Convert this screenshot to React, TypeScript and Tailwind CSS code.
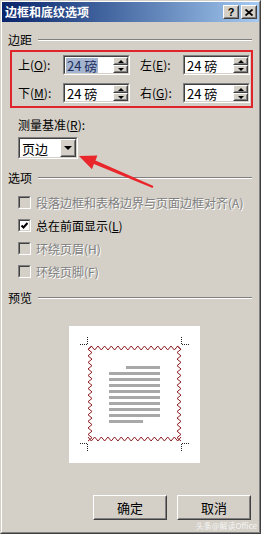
import React from 'react'

const font = "font-['Noto_Sans_CJK_SC','Noto_Sans',sans-serif]"

const Raised = ({ className = '', children }: { className?: string, children?: React.ReactNode }) => (
  <div className={`border border-t-white border-l-white border-r-[#404040] border-b-[#404040] bg-[#d4d0c8] ${className}`}>
    <div className="w-full h-full border border-t-[#d4d0c8] border-l-[#d4d0c8] border-r-[#808080] border-b-[#808080] flex items-center justify-center">
      {children}
    </div>
  </div>
)

const Sunken = ({ className = '', inner = 'bg-white', children }: { className?: string, inner?: string, children?: React.ReactNode }) => (
  <div className={`border border-t-[#808080] border-l-[#808080] border-r-white border-b-white ${className}`}>
    <div className={`w-full h-full border border-t-[#404040] border-l-[#404040] border-r-[#d4d0c8] border-b-[#d4d0c8] flex ${inner}`}>
      {children}
    </div>
  </div>
)

const Section = ({ title }: { title: string }) => (
  <div className="ml-[6px] w-[244px] h-[14px] flex items-center gap-[6px]">
    <span className="text-[12px] leading-[14px] text-black">{title}</span>
    <div className="flex-1 border-t border-t-[#808080] border-b border-b-white" />
  </div>
)

const Spin = ({ selected }: { selected?: boolean }) => (
  <Sunken className="w-[67px] h-[20px]">
    <div className="flex-1 flex items-center pl-px">
      <span className={`text-[13px] leading-[15px] px-px ${selected ? 'bg-[#a5b5d0] text-[#1c2d5c]' : 'text-black'}`}>24 磅</span>
    </div>
    <div className="w-[15px] flex flex-col">
      <Raised className="h-[8px] w-full">
        <div className="w-0 h-0 border-x-[3px] border-x-transparent border-b-[3px] border-b-black" />
      </Raised>
      <Raised className="h-[8px] w-full">
        <div className="w-0 h-0 border-x-[3px] border-x-transparent border-t-[3px] border-t-black" />
      </Raised>
    </div>
  </Sunken>
)

const Label = ({ ch, k, w }: { ch: string, k: string, w: string }) => (
  <span className={`text-[12px] leading-[14px] text-black ${w}`}>{ch}(<u>{k}</u>):</span>
)

const Check = ({ text, k, checked, disabled }: { text: string, k: string, checked?: boolean, disabled?: boolean }) => (
  <div className="ml-[16px] h-[23px] flex items-center gap-[5px]">
    <Sunken className="w-[13px] h-[13px]" inner={disabled ? 'bg-[#d4d0c8]' : 'bg-white'}>
      {checked && (
        <svg width="9" height="9" viewBox="0 0 9 9">
          <path d="M1.5 4.5 L3.5 6.5 L7.5 2" stroke="black" strokeWidth="2" fill="none" />
        </svg>
      )}
    </Sunken>
    <span className={`text-[12px] leading-[14px] ${disabled ? 'text-[#808080] [text-shadow:1px_1px_0_#fff]' : 'text-black'}`}>
      {text}({checked ? <u>{k}</u> : k})
    </span>
  </div>
)

const zig = (x1: number, y1: number, x2: number, y2: number, amp: number) => {
  const pts: string[] = []
  const horiz = y1 === y2
  const len = horiz ? x2 - x1 : y2 - y1
  const n = Math.round(len / 3.3)
  for (let i = 0; i <= n; i++) {
    const t = (len * i) / n
    const off = i % 2 === 0 ? 0 : amp
    pts.push(horiz ? `${x1 + t},${y1 + off}` : `${x1 + off},${y1 + t}`)
  }
  return pts.join(' ')
}

const Preview = () => (
  <div className="ml-[67px] w-[131px] h-[137px] bg-white">
    <svg width="131" height="137" viewBox="0 0 131 137">
      <g stroke="#222" strokeWidth="1" strokeDasharray="1 1" fill="none">
        <path d="M11 18.5 H18.5 V11" />
        <path d="M120 18.5 H112.5 V11" />
        <path d="M11 117.5 H18.5 V125" />
        <path d="M120 117.5 H112.5 V125" />
      </g>
      <g stroke="#8e1c22" strokeWidth="1" fill="none">
        <polyline points={zig(19, 24, 112, 24, -4)} />
        <polyline points={zig(19, 111, 112, 111, 4)} />
        <polyline points={zig(23, 20, 23, 115, -4)} />
        <polyline points={zig(108, 20, 108, 115, 4)} />
      </g>
      <g fill="#a8a8a8">
        <rect x="57" y="40" width="34" height="3" />
        {[1, 2, 3, 4, 5, 6, 7, 8].map(i => (
          <rect key={i} x="40" y={40 + i * 6} width="51" height="3" />
        ))}
        <rect x="40" y="94" width="34" height="3" />
      </g>
    </svg>
  </div>
)

export default function App() {
  return (
    <div className={`relative w-[261px] h-[534px] overflow-hidden bg-[#d4d0c8] border border-t-[#d4d0c8] border-l-[#d4d0c8] border-r-[#404040] border-b-[#404040] ${font}`}>
      <div className="h-full border border-t-white border-l-white border-r-[#808080] border-b-[#808080] flex flex-col">
        <div className="h-[20px] bg-gradient-to-r from-[#0a246a] to-[#a6caf0] flex items-center pl-[3px] pr-[2px]">
          <span className="text-white font-bold text-[12px] leading-[14px] flex-1">边框和底纹选项</span>
          <Raised className="w-[16px] h-[14px]">
            <span className="text-[11px] leading-none font-bold text-black font-['Liberation_Sans',sans-serif]">?</span>
          </Raised>
          <Raised className="w-[16px] h-[14px] ml-[2px]">
            <svg width="8" height="7" viewBox="0 0 8 7">
              <path d="M0.5 0.5 L7.5 6.5 M7.5 0.5 L0.5 6.5" stroke="black" strokeWidth="1.8" />
            </svg>
          </Raised>
        </div>

        <div className="mt-[11px]"><Section title="边距" /></div>

        <div className="ml-[8px] mt-[3px] w-[243px] h-[58px] border-2 border-[#e0242c] pt-[3px] pl-[6px] flex flex-col gap-[8px]">
          <div className="flex items-center">
            <Label ch="上" k="O" w="w-[45px]" />
            <Spin selected />
            <span className="ml-[10px]" />
            <Label ch="左" k="E" w="w-[43px]" />
            <Spin />
          </div>
          <div className="flex items-center">
            <Label ch="下" k="M" w="w-[45px]" />
            <Spin />
            <span className="ml-[10px]" />
            <Label ch="右" k="G" w="w-[43px]" />
            <Spin />
          </div>
        </div>

        <div className="ml-[16px] mt-[10px] text-[12px] leading-[14px] text-black">测量基准(<u>R</u>):</div>
        <Sunken className="ml-[16px] mt-[5px] w-[60px] h-[22px]">
          <div className="flex-1 flex items-center pl-[2px] text-[13px] leading-[15px] text-black">页边</div>
          <Raised className="w-[16px] h-full">
            <div className="w-0 h-0 border-x-[4px] border-x-transparent border-t-[4px] border-t-black" />
          </Raised>
        </Sunken>

        <div className="mt-[12px]"><Section title="选项" /></div>
        <div className="mt-[6px]">
          <Check text="段落边框和表格边界与页面边框对齐" k="A" disabled />
          <Check text="总在前面显示" k="L" checked />
          <Check text="环绕页眉" k="H" disabled />
          <Check text="环绕页脚" k="F" disabled />
        </div>

        <div className="mt-[8px]"><Section title="预览" /></div>
        <div className="mt-[21px]"><Preview /></div>

        <div className="ml-[91px] mt-[32px] flex gap-[10px]">
          <Raised className="w-[74px] h-[25px]">
            <span className="text-[13px] leading-[15px] text-black">确定</span>
          </Raised>
          <Raised className="w-[74px] h-[25px]">
            <span className="text-[13px] leading-[15px] text-black">取消</span>
          </Raised>
        </div>
      </div>

      <svg className="absolute -left-px -top-px pointer-events-none" width="261" height="534" viewBox="0 0 261 534">
        <polygon
          fill="#e8262b"
          points="79,156 97.4,155.4 95.5,160.5 153.4,186.1 152.6,187.9 93.9,164.1 92,169.2"
        />
      </svg>

      <span className="absolute right-[3px] bottom-[2px] text-[8px] leading-[10px] text-white opacity-80">头条@解读Office</span>
    </div>
  )
}
